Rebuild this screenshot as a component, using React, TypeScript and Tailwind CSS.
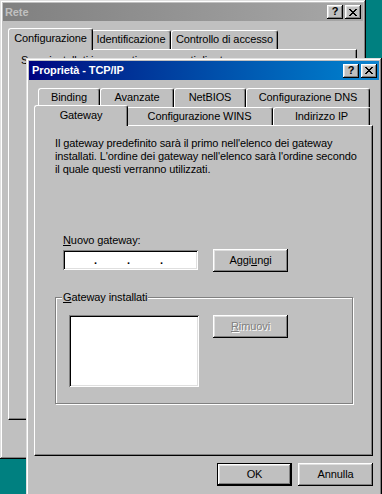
import React from 'react';

const raised =
  'shadow-[inset_-1px_-1px_0_#000,inset_1px_1px_0_#fff,inset_-2px_-2px_0_#808080,inset_2px_2px_0_#dfdfdf]';

function CloseGlyph() {
  return (
    <svg width="8" height="7" viewBox="0 0 8 7" shapeRendering="crispEdges">
      <g fill="#000">
        <rect x="0" y="0" width="2" height="1" />
        <rect x="6" y="0" width="2" height="1" />
        <rect x="1" y="1" width="2" height="1" />
        <rect x="5" y="1" width="2" height="1" />
        <rect x="2" y="2" width="4" height="1" />
        <rect x="3" y="3" width="2" height="1" />
        <rect x="2" y="4" width="4" height="1" />
        <rect x="1" y="5" width="2" height="1" />
        <rect x="5" y="5" width="2" height="1" />
        <rect x="0" y="6" width="2" height="1" />
        <rect x="6" y="6" width="2" height="1" />
      </g>
    </svg>
  );
}

function TitleButtons() {
  return (
    <div className="flex gap-[2px]">
      <div className="w-[16px] h-[14px] bg-[#c0c0c0] shadow-[inset_-1px_-1px_0_#000,inset_1px_1px_0_#fff,inset_-2px_-2px_0_#808080,inset_2px_2px_0_#dfdfdf] flex items-center justify-center">
        <span className="text-[11px] font-bold leading-none text-black -mt-[1px]">?</span>
      </div>
      <div className="w-[16px] h-[14px] bg-[#c0c0c0] shadow-[inset_-1px_-1px_0_#000,inset_1px_1px_0_#fff,inset_-2px_-2px_0_#808080,inset_2px_2px_0_#dfdfdf] flex items-center justify-center">
        <CloseGlyph />
      </div>
    </div>
  );
}

function Tab({ label, width, active }: { label: React.ReactNode; width: number; active?: boolean }) {
  if (active) {
    return (
      <div
        style={{ width: width + 4 }}
        className="relative z-10 -mx-[2px] -mb-[1px] h-[calc(100%+3px)] bg-[#c0c0c0] border-t border-l border-r border-t-white border-l-white border-r-black rounded-t-[3px] shadow-[inset_-1px_0_0_#808080] flex items-start justify-center pt-[3px]"
      >
        {label}
      </div>
    );
  }
  return (
    <div
      style={{ width }}
      className="h-full bg-[#c0c0c0] border-t border-l border-r border-t-white border-l-white border-r-black rounded-t-[3px] shadow-[inset_-1px_0_0_#808080] flex items-start justify-center pt-[2px]"
    >
      {label}
    </div>
  );
}

function Button({ children, wide = 75, def, disabled }: { children: React.ReactNode; wide?: number; def?: boolean; disabled?: boolean }) {
  if (def) {
    return (
      <div style={{ width: wide }} className="h-[23px] border border-black">
        <div className={`w-full h-full bg-[#c0c0c0] ${raised} flex items-center justify-center`}>{children}</div>
      </div>
    );
  }
  return (
    <div
      style={{ width: wide }}
      className={`h-[23px] bg-[#c0c0c0] ${raised} flex items-center justify-center ${
        disabled ? 'text-[#808080] [text-shadow:1px_1px_0_#fff]' : ''
      }`}
    >
      {children}
    </div>
  );
}

export default function App() {
  return (
    <div className="relative w-[382px] h-[494px] overflow-hidden bg-[#008080] text-[11px] leading-[13px] text-black font-['Liberation_Sans',Arial,sans-serif] tracking-[-0.1px]">
      {/* Rete (background window) */}
      <div className="absolute left-0 top-0 w-[366px] h-[459px] bg-[#c0c0c0] p-[3px] shadow-[inset_-1px_-1px_0_#000,inset_1px_1px_0_#dfdfdf,inset_-2px_-2px_0_#808080,inset_2px_2px_0_#fff]">
        <div className="h-[18px] bg-gradient-to-r from-[#808080] to-[#a8a8a8] flex items-center justify-between pl-[2px] pr-[2px]">
          <span className="font-bold text-[#c0c0c0]">Rete</span>
          <TitleButtons />
        </div>
        <div className="mt-[9px] ml-[7px] h-[19px] flex items-end">
          <Tab label="Configurazione" width={81} active />
          <Tab label="Identificazione" width={80} />
          <Tab label="Controllo di accesso" width={107} />
        </div>
        <div className="ml-[5px] w-[349px] h-[371px] border-t border-l border-r border-b border-t-white border-l-white border-r-black border-b-black shadow-[inset_-1px_-1px_0_#808080] pt-[4px] pl-[12px]">
          <div>Sono installati i seguenti componenti di rete:</div>
        </div>
      </div>

      {/* Proprietà - TCP/IP */}
      <div className="absolute left-[26px] top-[58px] w-[356px] h-[450px] bg-[#c0c0c0] p-[3px] shadow-[inset_-1px_-1px_0_#000,inset_1px_1px_0_#dfdfdf,inset_-2px_-2px_0_#808080,inset_2px_2px_0_#fff]">
        <div className="h-[19px] bg-gradient-to-r from-[#000080] to-[#1084d0] flex items-center justify-between pl-[3px] pr-[2px]">
          <span className="font-bold text-white">Proprietà - TCP/IP</span>
          <TitleButtons />
        </div>

        <div className="mt-[8px] ml-[9px] h-[19px] flex">
          <Tab label="Binding" width={62} />
          <Tab label="Avanzate" width={74} />
          <Tab label="NetBIOS" width={72} />
          <Tab label="Configurazione DNS" width={124} />
        </div>
        <div className="ml-[7px] h-[18px] flex items-end">
          <Tab label="Gateway" width={90} active />
          <Tab label="Configurazione WINS" width={147} />
          <Tab label="Indirizzo IP" width={97} />
        </div>

        <div className="ml-[5px] w-[339px] h-[331px] border-t border-l border-r border-b border-t-white border-l-white border-r-black border-b-black shadow-[inset_-1px_-1px_0_#808080] pt-[11px] pl-[20px]">
          <p>
            Il gateway predefinito sarà il primo nell'elenco dei gateway
            <br />
            installati. L'ordine dei gateway nell'elenco sarà l'ordine secondo
            <br />
            il quale questi verranno utilizzati.
          </p>

          <div className="mt-[58px] ml-[8px]">
            <span className="underline">N</span>uovo gateway:
          </div>
          <div className="mt-[2px] ml-[8px] flex items-start">
            <div className="mt-[1px] w-[135px] h-[20px] bg-white shadow-[inset_1px_1px_0_#808080,inset_-1px_-1px_0_#fff,inset_2px_2px_0_#000,inset_-2px_-2px_0_#dfdfdf] flex items-center pl-[31px] gap-[30px] font-bold">
              <span>.</span>
              <span>.</span>
              <span>.</span>
            </div>
            <div className="ml-[15px]">
              <Button>
                Aggi<span className="underline">u</span>ngi
              </Button>
            </div>
          </div>

          <div className="relative mt-[25px] w-[298px] h-[107px] border border-[#808080] shadow-[inset_1px_1px_0_#fff,1px_1px_0_#fff] pt-[17px] pl-[13px] flex items-start">
            <span className="absolute -top-[7px] left-[6px] bg-[#c0c0c0] px-[1px]">
              <span className="underline">G</span>ateway installati
            </span>
            <div className="w-[130px] h-[72px] bg-white shadow-[inset_1px_1px_0_#808080,inset_-1px_-1px_0_#fff,inset_2px_2px_0_#000,inset_-2px_-2px_0_#dfdfdf]" />
            <div className="ml-[14px]">
              <Button disabled>
                <span className="underline">R</span>imuovi
              </Button>
            </div>
          </div>
        </div>

        <div className="mt-[7px] flex justify-end gap-[6px] pr-[6px]">
          <Button def>OK</Button>
          <Button>Annulla</Button>
        </div>
      </div>
    </div>
  );
}
